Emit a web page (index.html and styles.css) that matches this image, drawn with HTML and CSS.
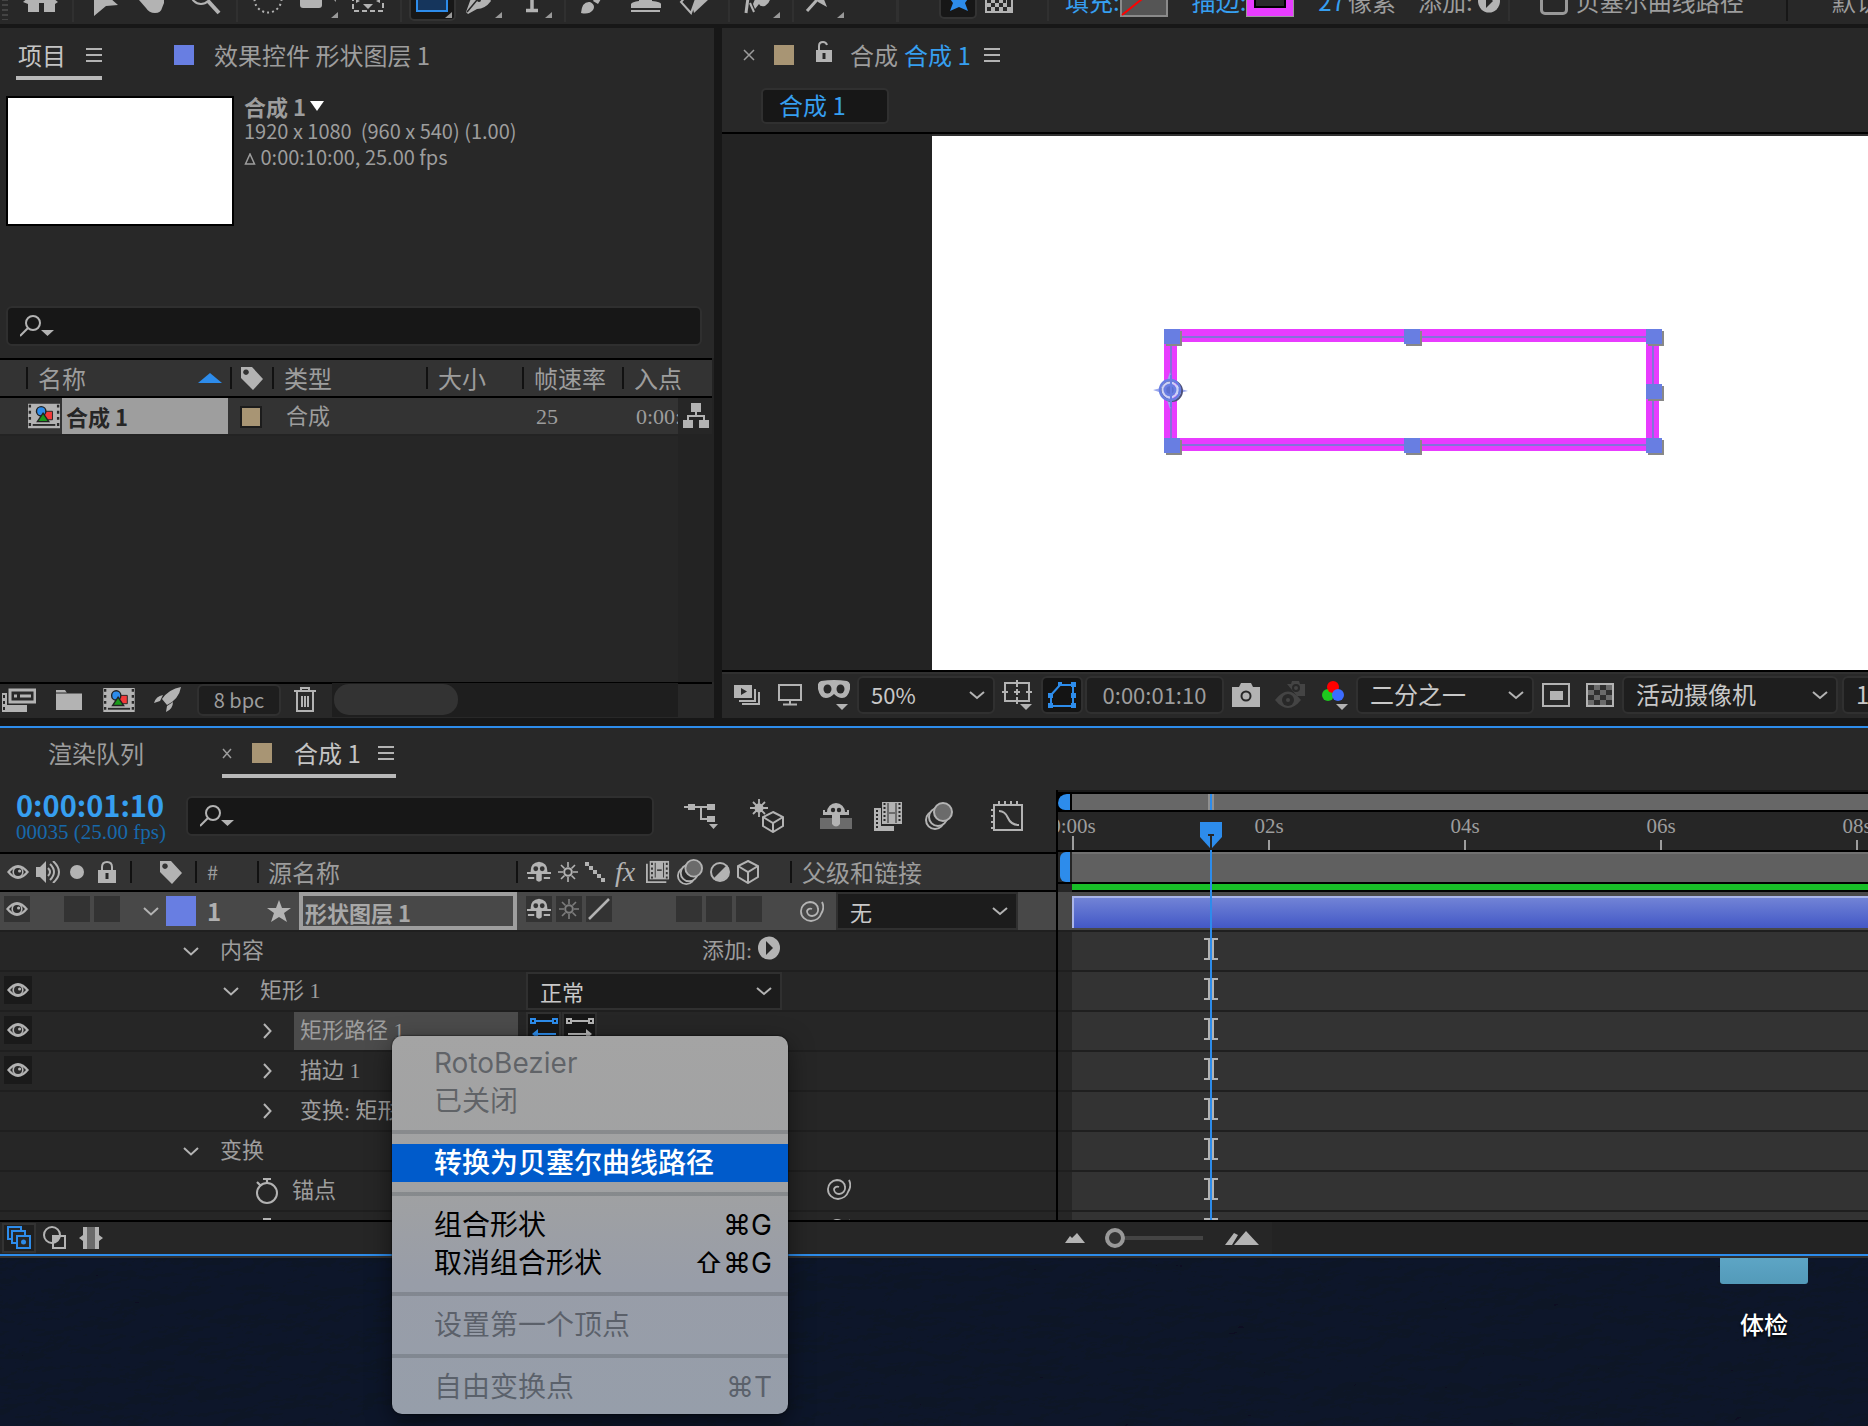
FILE: index.html
```html
<!DOCTYPE html>
<html lang="zh-CN">
<head>
<meta charset="utf-8">
<title>合成 1</title>
<link rel="stylesheet" href="styles.css">
</head>
<body>
<svg class="sprite" aria-hidden="true">
  <symbol id="eye" viewBox="0 0 22 16"><path d="M0 8Q11-6 22 8Q11 22 0 8z" fill="currentColor"/><path d="M3 8Q11-1 19 8Q11 17 3 8z" fill="#2a2a2a"/><circle cx="11" cy="8" r="5.6" fill="currentColor"/><circle cx="11" cy="8" r="4" fill="#2a2a2a"/><circle cx="12.6" cy="7" r="1.6" fill="currentColor"/></symbol>
  <symbol id="tag" viewBox="0 0 24 24"><path fill-rule="evenodd" d="M1 1h11l11 12-10 11L1 12zM6 3.4a2.8 2.8 0 1 0 .01 0z" fill="currentColor"/></symbol>
  <symbol id="menu" viewBox="0 0 16 14"><path d="M0 1h16M0 7h16M0 13h16" stroke="currentColor" stroke-width="2"/></symbol>
  <symbol id="down" viewBox="0 0 16 9"><path d="M1 1l7 6.500 7-6.500" fill="none" stroke="currentColor" stroke-width="2"/></symbol>
  <symbol id="right" viewBox="0 0 9 16"><path d="M1 1l6.500 7-6.500 7" fill="none" stroke="currentColor" stroke-width="2"/></symbol>
  <symbol id="search" viewBox="0 0 34 22"><ellipse cx="13" cy="8" rx="7" ry="7" fill="none" stroke="currentColor" stroke-width="2"/><path d="M8 13L0 21" stroke="currentColor" stroke-width="2"/><path d="M21 15h13l-6.500 6z" fill="currentColor"/></symbol>
  <symbol id="comp" viewBox="0 0 34 26"><path d="M0 0h34v26H0z" fill="currentColor"/><path d="M2 1v24M32 1v24" stroke="#2a2a2a" stroke-width="2.500" stroke-dasharray="3 3.500"/><path d="M5 22.500h24" stroke="#2a2a2a" stroke-width="2"/><path d="M17 8h9v9h-9z" fill="#f33a3a" stroke="#222"/><circle cx="14" cy="8" r="5" fill="#2d8ceb" stroke="#222" stroke-width="1.500"/><path d="M16 10l6 9H10z" fill="#1b9a1b" stroke="#222" stroke-width="1.500"/></symbol>
  <symbol id="shy" viewBox="0 0 26 22"><path d="M4 12q-1-11 9-12 10 1 9 12l-6 1v7q-3 3-6 0v-7z" fill="currentColor"/><circle cx="9.500" cy="7.500" r="2.600" fill="#333"/><circle cx="16.500" cy="7.500" r="2.600" fill="#333"/><path d="M0 12h26M1 17.500h7M18 17.500h7" stroke="currentColor" stroke-width="2.200"/><path d="M9 14v6M17 14v6" stroke="#333" stroke-width="1.500"/></symbol>
  <symbol id="sun" viewBox="0 0 20 20"><circle cx="10" cy="10" r="3.800" fill="none" stroke="currentColor" stroke-width="2"/><path d="M10 0v5M10 15v5M0 10h5M15 10h5M3 3l3.500 3.500M13.500 13.500L17 17M17 3l-3.500 3.500M6.500 13.500L3 17" stroke="currentColor" stroke-width="1.600"/></symbol>
  <symbol id="film" viewBox="0 0 26 24"><path d="M1 3v20h21" fill="none" stroke="currentColor" stroke-width="2"/><path d="M4 0h21v20H4z" fill="currentColor"/><path d="M6.500 2v17M22.500 2v17" stroke="#333" stroke-width="2" stroke-dasharray="2.500 2.500"/><path d="M10 2v16M19 2v16" stroke="#333"/><path d="M12 10h5" stroke="#333" stroke-width="1.600"/></symbol>
  <symbol id="blur" viewBox="0 0 28 28"><g fill="#2a2a2a" stroke="currentColor" stroke-width="2"><circle cx="10" cy="18" r="9"/><circle cx="13" cy="15" r="9"/><circle cx="18" cy="10" r="9" fill="#6b6b6b"/></g></symbol>
  <symbol id="cube" viewBox="0 0 22 24"><path d="M11 1l10 5v11l-10 6-10-6V6zM1 6l10 6 10-6M11 12v11" fill="none" stroke="currentColor" stroke-width="2"/></symbol>
  <symbol id="spiral" viewBox="0 0 24 22"><path d="M22 2c2 4 1 9-1 12a11 9 0 0 1-10 7a10 9.500 0 0 1-10-9.500 10 9 0 0 1 9-9.500 8 7 0 0 1 8 7 6 6 0 0 1-6 7 5 5 0 0 1-5-5 3.500 3.500 0 0 1 5-2" fill="none" stroke="currentColor" stroke-width="1.800"/></symbol>
  <symbol id="watch" viewBox="0 0 24 28"><circle cx="12" cy="16" r="10" fill="none" stroke="currentColor" stroke-width="2"/><path d="M8 2h8M12 2v4M2 5l4 4" stroke="currentColor" stroke-width="2.200"/></symbol>
  <symbol id="beam" viewBox="0 0 14 22"><path d="M0 1h14M0 21h14M5 1v20M9 1v20" stroke="#b3b3b3" stroke-width="2"/></symbol>
  <symbol id="play" viewBox="0 0 22 24"><ellipse cx="11" cy="12" rx="11" ry="11.500" fill="currentColor"/><path d="M8 5v14l7-7z" fill="#262626"/></symbol>
  <symbol id="checker" viewBox="0 0 28 24"><path d="M1 1h26v22H1z" fill="#6b6b6b"/><path d="M2 2h6v5H2zM14 2h6v5h-6zM8 7h6v5H8zM20 7h6v5h-6zM2 12h6v5H2zM14 12h6v5h-6zM8 17h6v5H8zM20 17h6v5h-6z" fill="#303030"/><path d="M1 1h26v22H1z" fill="none" stroke="currentColor" stroke-width="2"/></symbol>
</svg>

<header class="toolbar">
  <div class="tools">
    <svg width="14" height="40" viewBox="0 -18 14 40"><path d="M5 -16v36" stroke="#444" stroke-width="6" stroke-dasharray="2 3"/></svg>
    <button aria-label="主页"><svg width="58" height="40" viewBox="14 -18 58 40"><path d="M23 2L40-12 58 2 55 4V12H44V3h-5v9H28V4z" fill="#b3b3b3"/></svg></button>
    <i class="bar"></i>
    <button aria-label="选取"><svg width="54" height="40" viewBox="74 -18 54 40"><path d="M94-16L118 5l-12 1-12 10z" fill="#b3b3b3"/></svg></button>
    <button aria-label="手形"><svg width="48" height="40" viewBox="128 -18 48 40"><path d="M140-12h24V3l-2 5q-1 5-7 5t-9-5l-7-8z" fill="#b3b3b3"/></svg></button>
    <button aria-label="缩放"><svg width="60" height="40" viewBox="176 -18 60 40"><circle cx="201" cy="-6" r="10" fill="none" stroke="#b3b3b3" stroke-width="2"/><path d="M208 1l11 12" stroke="#b3b3b3" stroke-width="4"/></svg></button>
    <i class="bar"></i>
    <button aria-label="旋转"><svg width="52" height="40" viewBox="238 -18 52 40"><circle cx="268" cy="-1" r="13.500" fill="none" stroke="#b3b3b3" stroke-width="2" stroke-dasharray="2 3"/></svg></button>
    <button aria-label="摄像机"><svg width="52" height="40" viewBox="290 -18 52 40"><rect x="300" y="-12" width="22" height="20" rx="3" fill="#b3b3b3"/><path d="M334 0h2v2z M338 12v6h-7z" fill="#999"/></svg></button>
    <button aria-label="锚点"><svg width="58" height="40" viewBox="342 -18 58 40"><path d="M353-12v23h30v-23" fill="none" stroke="#b3b3b3" stroke-width="2" stroke-dasharray="5 3"/><path d="M363 4h10l-5 5zM356-1l4 2-4 2zM380-1l-4 2 4 2z" fill="#b3b3b3"/></svg></button>
    <i class="bar"></i>
    <button aria-label="矩形"><svg width="58" height="40" viewBox="402 -18 58 40"><rect x="410" y="-20" width="45" height="40" rx="4" fill="#171717" stroke="#333" stroke-width="2"/><rect x="417" y="-14" width="30" height="25" fill="#15355c" stroke="#2d8ceb" stroke-width="2"/><path d="M452 12v6h-7z" fill="#999"/></svg></button>
    <button aria-label="钢笔"><svg width="46" height="40" viewBox="460 -18 46 40"><path d="M474-8h12l5 9q-6 8-14 8l-9 5-2-2 4-11z" fill="#b3b3b3"/><path d="M467 12l10-12" stroke="#282828" stroke-width="1.500"/><circle cx="479" cy="0" r="2" fill="#282828"/><path d="M502 12v6h-7z" fill="#999"/></svg></button>
    <button aria-label="文字"><svg width="58" height="40" viewBox="506 -18 58 40"><path d="M526 10.500h12M532-12v22" stroke="#b3b3b3" stroke-width="3.500"/><path d="M552 12v6h-7z" fill="#999"/></svg></button>
    <i class="bar"></i>
    <button aria-label="画笔"><svg width="50" height="40" viewBox="566 -18 50 40"><path d="M581 13q1-12 9-11 6 3 3 8-4 5-12 3zM593 1l8-12h6l-9 15z" fill="#b3b3b3"/></svg></button>
    <button aria-label="仿制图章"><svg width="54" height="40" viewBox="616 -18 54 40"><path d="M631 8V4q1-2 8-3v-14h13V1q9 1 9 3v4zM631 10h29v2h-29z" fill="#b3b3b3"/></svg></button>
    <button aria-label="橡皮擦"><svg width="58" height="40" viewBox="670 -18 58 40"><path d="M694 13l15-14-4-8h-12l-4 3z" fill="#b3b3b3"/><path d="M681 2l8-9 7 6-5 14z" fill="#282828" stroke="#b3b3b3" stroke-width="2"/></svg></button>
    <i class="bar"></i>
    <button aria-label="Roto 笔刷"><svg width="62" height="40" viewBox="730 -18 62 40"><path d="M749-10l-3 23" stroke="#b3b3b3" stroke-width="3"/><path d="M750 3l4 9" stroke="#b3b3b3" stroke-width="2"/><path d="M753 4l5-12h12q2 10-5 14-5 1-6-2l-4 5z" fill="#b3b3b3"/><path d="M780 12v6h-7z" fill="#999"/></svg></button>
    <i class="bar"></i>
    <button aria-label="人偶位置控点"><svg width="102" height="40" viewBox="794 -18 102 40"><path d="M807 11l18-20" stroke="#b3b3b3" stroke-width="3"/><path d="M814-5l9 2 4 10-9-5z" fill="#b3b3b3"/><path d="M844 12v6h-7z" fill="#999"/></svg></button>
    <i class="bar wide"></i>
  </div>
  <div class="tool-options">
    <svg width="38" height="40" viewBox="939 -18 38 40"><rect x="940" y="-20" width="36" height="39" rx="4" fill="#171717" stroke="#333" stroke-width="2"/><path d="M959-12l4 9h7l-5 7 3 8-9-4-9 4 3-8-5-7h7z" fill="#2d8ceb"/></svg>
    <svg width="28" height="40" viewBox="984 -18 28 40"><path d="M984-10h28v24h-28z" fill="#b3b3b3"/><path d="M986 0h4v4h-4zM994 0h4v4h-4zM1002 0h3v4h-3zM990 4h4v4h-4zM998 4h4v4h-4zM1006 0h4v8h-4zM986 8h4v4h-4zM994 8h4v4h-4zM1002 8h4v4h-4z" fill="#2a2a2a"/></svg>
    <i class="bar opt"></i>
    <a href="#fill" class="fill-link">填充:</a>
    <svg width="48" height="40" viewBox="0 -18 48 40"><path d="M1-14h46v31H1z" fill="#555" stroke="#8a8a8a" stroke-width="2"/><path d="M2 16L27-4" stroke="#f00" stroke-width="2"/></svg>
    <a href="#stroke" class="stroke-link">描边:</a>
    <svg width="48" height="40" viewBox="0 -18 48 40"><path d="M0-14h48v32H0z" fill="#999"/><path d="M1-14h46v31H1z" fill="#e83cff"/><path d="M9-10h30V8H9z" fill="#2a2a2a" stroke="#000" stroke-width="2"/></svg>
    <a href="#width" class="px-link">27</a><span class="px">像素</span>
    <span class="add">添加:</span>
    <svg width="22" height="24"><use href="#play"/></svg>
    <i class="bar add-bar"></i>
    <label class="bezier"><input type="checkbox">贝塞尔曲线路径</label>
    <i class="bar end"></i>
    <span class="preset">默认</span>
  </div>
</header>

<main class="docks">
  <section class="panel project">
    <nav class="tabs">
      <span class="tab active first">项目 <svg width="16" height="14"><use href="#menu"/></svg></span>
      <span class="tab fx-tab"><i class="chip blue"></i>效果控件 形状图层 1</span>
    </nav>
    <div class="summary">
      <div class="thumb"></div>
      <div class="meta">
        <strong>合成 1<svg width="14" height="10" viewBox="0 0 14 10"><path d="M0 0h14L7 10z" fill="#fff"/></svg></strong>
        <span>1920 x 1080&nbsp; (960 x 540) (1.00)</span>
        <span><svg width="12" height="12" viewBox="0 0 12 12"><path d="M6 1l4.500 10h-9z" fill="none" stroke="#9d9d9d" stroke-width="1.500"/></svg> 0:00:10:00, 25.00 fps</span>
      </div>
    </div>
    <label class="search"><svg width="34" height="22"><use href="#search"/></svg><input type="text" aria-label="搜索项目"></label>
    <div class="asset-list">
      <table>
        <colgroup><col class="c0"><col class="c1"><col class="c2"><col class="c3"><col class="c4"><col class="c5"><col class="c6"><col class="c7"></colgroup>
        <thead><tr><th></th><th class="sep"><div class="sortable">名称<svg width="24" height="10" viewBox="0 0 24 10"><path d="M12 0l12 10H0z" fill="#2d8ceb"/></svg></div></th><th class="sep tagcell"><svg width="24" height="24"><use href="#tag"/></svg></th><th class="sep">类型</th><th class="sep">大小</th><th class="sep">帧速率</th><th class="sep" colspan="2">入点</th></tr></thead>
        <tbody><tr><td colspan="2" class="asset"><div><svg width="32" height="26"><use href="#comp"/></svg><b>合成 1</b></div></td><td class="tagcell"><i class="swatch"></i></td><td class="thin">合成</td><td></td><td class="thin">25</td><td class="thin">0:00:00:00</td><td class="tree"><svg width="28" height="26" viewBox="0 0 28 26"><path d="M9 0h10v9H9zM1 17h10v8H1zM17 17h10v8H17z" fill="#b3b3b3"/><path d="M14 8v5M6 18v-5h16v5" fill="none" stroke="#b3b3b3" stroke-width="2"/></svg></td></tr></tbody>
      </table>
    </div>
    <footer class="project-bar">
      <svg width="36" height="26" viewBox="0 0 36 26"><path d="M2 6h5v12h20v7H2z" fill="#b3b3b3"/><path d="M4 8v16" stroke="#282828" stroke-width="2" stroke-dasharray="3 3"/><rect x="10" y="3" width="25" height="12" fill="#282828" stroke="#b3b3b3" stroke-width="3"/><path d="M14 9h3M20 9h11" stroke="#b3b3b3" stroke-width="3"/></svg>
      <svg class="folder" width="26" height="20" viewBox="0 0 26 20"><path d="M0 0h9l2 3h15v17H0z" fill="#b3b3b3"/><path d="M0 3h26" stroke="#282828"/></svg>
      <svg class="compicon" width="34" height="24"><use href="#comp"/></svg>
      <svg class="rocket" width="28" height="26" viewBox="0 0 28 26"><path d="M27 0q-12 2-19 12l5 6Q25 12 27 0zM9 8q-7 1-9 8l6-2zM19 15q0 7-7 10l1-6z" fill="#b3b3b3"/></svg>
      <button class="depth">8 bpc</button>
      <svg width="22" height="26" viewBox="0 0 22 26"><path d="M0 4h22M7 3V1h8v2M3 5v19h16V5M8 9v11M11 9v11M14 9v11" fill="none" stroke="#b3b3b3" stroke-width="2"/></svg>
      <div class="scroll"><i></i></div>
    </footer>
  </section>

  <section class="panel viewer">
    <nav class="tabs">
      <span class="tab comp-tab"><svg width="12" height="12" viewBox="0 0 12 12"><path d="M1 1l10 10M11 1L1 11" stroke="#9d9d9d" stroke-width="1.500"/></svg><i class="chip tan"></i><svg class="lock" width="18" height="22" viewBox="0 0 18 22"><path d="M1 9h16v12H1z" fill="#b3b3b3"/><path d="M4 9V5q0-4 4-4 3 0 4 3" fill="none" stroke="#b3b3b3" stroke-width="2"/><path d="M9 12v6" stroke="#282828" stroke-width="3"/></svg>合成 <a href="#comp1">合成 1</a><svg class="burger" width="16" height="14"><use href="#menu"/></svg></span>
    </nav>
    <button class="crumb">合成 1</button>
    <div class="stage">
      <div class="composition">
        <svg class="shape" width="530" height="140" viewBox="1146 320 530 140">
          <rect x="1170.500" y="335.500" width="482" height="109" fill="none" stroke="#e83cff" stroke-width="13"/>
          <rect x="1171" y="337" width="482" height="108" fill="none" stroke="#8472da" stroke-width="2"/>
          <g fill="#888"><path d="M1166 331h16v15h-16zM1406 331h16v15h-16zM1648 331h16v15h-16zM1648 386h16v15h-16zM1166 440h16v15h-16zM1406 440h16v15h-16zM1648 440h16v15h-16z"/></g>
          <g fill="#687ee2"><path d="M1164 329h16v15h-16zM1404 329h16v15h-16zM1646 329h16v15h-16zM1646 384h16v15h-16zM1164 438h16v15h-16zM1404 438h16v15h-16zM1646 438h16v15h-16z"/></g>
          <path d="M1153 390l12-3 5-15 4 15 14 4-14 3-4 15-5-15z" fill="#9ba8ee"/>
          <g fill="none" stroke="#687ee2"><circle cx="1172" cy="391" r="10" stroke="#4c4f78" stroke-width="2"/><circle cx="1170" cy="390" r="10" stroke-width="2.500"/><circle cx="1170" cy="390" r="7.500" stroke="#ccd2f6" stroke-width="2"/><circle cx="1170" cy="390" r="5" fill="#5d6fd0" stroke-width="2.500"/><path d="M1171 375v32" stroke-width="2"/></g>
        </svg>
      </div>
    </div>
    <footer class="viewer-bar">
      <svg width="26" height="22" viewBox="0 0 26 22"><path d="M0 1h18v13H0z" fill="#b3b3b3"/><path d="M7 4l6 3.500L7 11z" fill="#282828"/><path d="M21 5v12H5M25 8v12H8" fill="none" stroke="#b3b3b3" stroke-width="2"/></svg>
      <svg class="monitor" width="24" height="22" viewBox="0 0 24 22"><path d="M1 1h22v15H1zM12 16v4M5 20.500h14" fill="none" stroke="#b3b3b3" stroke-width="2"/></svg>
      <svg class="mask" width="32" height="30" viewBox="0 0 32 30"><path d="M3 1q13-2 26 0 4 1 3 8-2 9-8 9-4 0-8-4-4 4-8 4-6 0-8-9-1-7 3-8z" fill="#b3b3b3"/><ellipse cx="9.500" cy="9" rx="4" ry="4.500" fill="#282828"/><ellipse cx="22.500" cy="9" rx="4" ry="4.500" fill="#282828"/><path d="M18 24h12l-6 6z" fill="#b3b3b3"/></svg>
      <select class="zoom-level" aria-label="放大率"><option>50%</option></select>
      <svg class="guides" width="30" height="30" viewBox="0 0 30 30"><path d="M3 3h24v18H3zM15 0v7M15 17v7M0 12h6M24 12h6M12 12h6M15 9v6" fill="none" stroke="#b3b3b3" stroke-width="2"/><path d="M18 24h12l-6 6z" fill="#b3b3b3"/></svg>
      <button class="mask-toggle" aria-label="切换蒙版和形状路径可见性"><svg width="28" height="26" viewBox="0 0 28 26"><path d="M3 24V13l9-10h13v21z" fill="none" stroke="#2d8ceb" stroke-width="2"/><path d="M0 11h5v5H0zM10 0h4v4h-4zM23 0h5v5h-5zM23 11h5v5h-5zM23 21h5v5h-5zM0 21h5v5H0z" fill="#2d8ceb"/></svg></button>
      <button class="timecode">0:00:01:10</button>
      <svg class="camera" width="28" height="24" viewBox="0 0 28 24"><path d="M0 4h7l2-4h10l2 4h7v20H0z" fill="#b3b3b3"/><circle cx="14" cy="13" r="5.500" fill="#282828"/><circle cx="14" cy="13" r="3.500" fill="#b3b3b3"/></svg>
      <svg class="ghost" width="30" height="28" viewBox="0 0 30 28"><path d="M12 3h4l1-3h7l1 3h5v12h-8z" fill="#444"/><circle cx="21" cy="7" r="3" fill="none" stroke="#282828" stroke-width="2"/><path d="M0 19q13-17 26 0-13 16-26 0z" fill="#444"/><circle cx="13" cy="19" r="6" fill="#282828"/><circle cx="13" cy="19" r="2" fill="#444"/></svg>
      <svg class="rgb" width="26" height="30" viewBox="0 0 26 30"><circle cx="6" cy="15" r="6" fill="#1ec81e"/><circle cx="11" cy="7" r="6" fill="#f00"/><circle cx="16" cy="15" r="6" fill="#3c6cff"/><path d="M14 24h12l-6 6z" fill="#b3b3b3"/></svg>
      <select class="resolution" aria-label="分辨率"><option>二分之一</option></select>
      <svg class="roi" width="28" height="24" viewBox="0 0 28 24"><path d="M1 1h26v22H1z" fill="none" stroke="#b3b3b3" stroke-width="2"/><path d="M8 8h13v9H8z" fill="#b3b3b3"/></svg>
      <svg class="grid" width="28" height="24"><use href="#checker"/></svg>
      <select class="cam" aria-label="3D 视图"><option>活动摄像机</option></select>
      <select class="views" aria-label="视图布局"><option>1 个视图</option></select>
    </footer>
  </section>
</main>

<section class="timeline">
  <nav class="tabs">
    <span class="tab queue">渲染队列</span>
    <span class="tab active"><svg width="10" height="12" viewBox="0 0 10 12"><path d="M1 2l8 9M9 2L1 11" stroke="#9d9d9d" stroke-width="1.500"/></svg><i class="chip tan"></i>合成 1<svg width="16" height="14"><use href="#menu"/></svg></span>
  </nav>
  <div class="timeline-body">
    <div class="outline">
      <div class="controls">
        <div class="now"><strong>0:00:01:10</strong><span>00035 (25.00 fps)</span></div>
        <label class="search"><svg width="34" height="22"><use href="#search"/></svg><input type="text" aria-label="搜索图层"></label>
        <svg class="flow" width="34" height="26" viewBox="0 0 34 26"><path d="M0 4h24M17 4v12h7" fill="none" stroke="#b3b3b3" stroke-width="2"/><path d="M4 1h7v6H4zM23 1h8v6h-8zM23 13h8v6h-8zM25 21h9l-4.500 5z" fill="#b3b3b3"/></svg>
        <svg class="draft" width="34" height="34" viewBox="0 0 34 34"><circle cx="9" cy="9" r="4.500" fill="#b3b3b3"/><path d="M9 0v18M0 9h18M3 3l12 12M15 3L3 15" stroke="#b3b3b3" stroke-width="1.800"/><path d="M23 13l10 5v9l-10 6-10-6v-9zM13 18l10 6 10-6M23 24v9" fill="#282828" stroke="#b3b3b3" stroke-width="2"/></svg>
        <svg class="hide" width="32" height="26" viewBox="0 0 32 26"><path d="M0 15h32v11H0z" fill="#6b6b6b"/><path d="M7 9a9 9 0 0 1 18 0h2V7h2v5H20v9q-4 5-8 0v-9H3V7h2v2z" fill="#b3b3b3"/><circle cx="13" cy="7" r="2.200" fill="#282828"/><circle cx="19" cy="7" r="2.200" fill="#282828"/></svg>
        <svg class="frames" width="30" height="30" viewBox="0 0 30 30"><path d="M1 7h7v18h13v5H1z" fill="#b3b3b3"/><path d="M4 9v19" stroke="#282828" stroke-width="2" stroke-dasharray="2 2"/><path d="M8 0h22v24H8z" fill="#282828"/><path d="M9 1h20v22H9z" fill="#b3b3b3"/><path d="M11.500 2v20M26.500 2v20" stroke="#282828" stroke-width="2" stroke-dasharray="2 2"/><path d="M15 2v20M23 2v20M16 12h6" stroke="#282828"/></svg>
        <svg class="mblur" width="28" height="30"><use href="#blur"/></svg>
        <svg class="graph" width="32" height="30" viewBox="0 0 32 30"><path d="M3 4h28v25H3zM8 0v5M14 0v5M20 0v5M26 0v5M0 9h4M0 15h4M0 21h4M0 27h4M8 10q6 0 9 7t11 7" fill="none" stroke="#b3b3b3" stroke-width="2"/></svg>
      </div>
      <div class="columns">
        <div class="av"><svg width="22" height="16"><use href="#eye"/></svg><svg width="24" height="22" viewBox="0 0 24 22"><path d="M0 6h4l6-6v22l-6-6H0z" fill="#b3b3b3"/><path d="M12 7q4 4 0 8M14 3q8 8 0 16M17 0q12 11 0 22" fill="none" stroke="#b3b3b3" stroke-width="2"/></svg><svg width="14" height="14" viewBox="0 0 14 14"><circle cx="7" cy="7" r="7" fill="#b3b3b3"/></svg><svg width="18" height="22" viewBox="0 0 18 22"><path d="M0 9h18v13H0z" fill="#b3b3b3"/><path d="M4 9V6q0-5 5-5t5 5v3" fill="none" stroke="#b3b3b3" stroke-width="2"/><path d="M9 12v6" stroke="#282828" stroke-width="3"/></svg></div>
        <div class="sep label"><svg width="24" height="24"><use href="#tag"/></svg></div>
        <div class="sep num">#</div>
        <div class="sep source">源名称</div>
        <div class="sep switches"><svg width="24" height="22"><use href="#shy"/></svg><svg width="20" height="20"><use href="#sun"/></svg><svg width="20" height="20" viewBox="0 0 20 20"><path d="M0 0h4v4H0zM4 4h4v4H4zM8 8h4v4H8zM12 12h4v4h-4zM16 16h4v4h-4z" fill="#b3b3b3"/></svg><em>fx</em><svg width="24" height="24"><use href="#film"/></svg><svg width="26" height="26"><use href="#blur"/></svg><svg width="20" height="20" viewBox="0 0 20 20"><circle cx="10" cy="10" r="9" fill="none" stroke="#b3b3b3" stroke-width="2"/><path d="M3 17A10 10 0 0 0 17 3z" fill="#b3b3b3"/></svg><svg width="22" height="24"><use href="#cube"/></svg></div>
        <div class="sep parent">父级和链接</div>
        <div class="sep rest"></div>
      </div>
      <div class="rows">
        <div class="row layer">
          <div class="av"><i class="box"><svg width="22" height="16"><use href="#eye"/></svg></i><i class="box solo"></i><i class="box"></i></div>
          <div class="name"><svg class="chev" width="16" height="9"><use href="#down"/></svg><i class="label-color"></i><b class="index">1</b><svg class="star" width="24" height="22" viewBox="0 0 24 22"><path d="M12 0l3 8h9l-7 5 3 9-8-5-8 5 3-9-7-5h9z" fill="#b3b3b3"/></svg><input class="rename" type="text" value="形状图层 1" aria-label="图层名称"></div>
          <div class="values"><i class="box"><svg width="24" height="22"><use href="#shy"/></svg></i><i class="box dim"><svg width="20" height="20"><use href="#sun"/></svg></i><i class="box"><svg width="22" height="22" viewBox="0 0 22 22"><path d="M1 21L21 1" stroke="#b3b3b3" stroke-width="2.500"/></svg></i><i class="box late"></i><i class="box"></i><i class="box"></i></div>
          <div class="link"><svg width="24" height="22"><use href="#spiral"/></svg><select class="parent-select" aria-label="父级"><option>无</option></select></div>
        </div>
        <div class="row"><div class="av"></div><div class="name d1"><svg class="chev" width="16" height="9"><use href="#down"/></svg>内容</div><div class="values end">添加:<svg width="22" height="24"><use href="#play"/></svg></div></div>
        <div class="row"><div class="av"><i class="box dark"><svg width="22" height="16"><use href="#eye"/></svg></i></div><div class="name d2"><svg class="chev" width="16" height="9"><use href="#down"/></svg>矩形 1</div><div class="values"><select class="mode" aria-label="混合模式"><option>正常</option></select></div></div>
        <div class="row"><div class="av"><i class="box dark"><svg width="22" height="16"><use href="#eye"/></svg></i></div><div class="name d3"><svg class="chev" width="9" height="16"><use href="#right"/></svg><span class="picked">矩形路径 1</span></div><div class="values paths"><button class="dir on" aria-label="正向路径"><svg width="28" height="22" viewBox="0 0 28 22"><path d="M1 1h4v4H1zM23 1h4v4h-4zM5 3h18M6 16h20" fill="none" stroke="currentColor" stroke-width="2"/><path d="M2 16l6-5v10z" fill="currentColor"/></svg></button><button class="dir" aria-label="反向路径"><svg width="28" height="22" viewBox="0 0 28 22"><path d="M1 1h4v4H1zM23 1h4v4h-4zM5 3h18M2 16h20" fill="none" stroke="currentColor" stroke-width="2"/><path d="M26 16l-6-5v10z" fill="currentColor"/></svg></button></div></div>
        <div class="row"><div class="av"><i class="box dark"><svg width="22" height="16"><use href="#eye"/></svg></i></div><div class="name d3"><svg class="chev" width="9" height="16"><use href="#right"/></svg>描边 1</div></div>
        <div class="row"><div class="av"></div><div class="name d3"><svg class="chev" width="9" height="16"><use href="#right"/></svg>变换: 矩形 1</div></div>
        <div class="row"><div class="av"></div><div class="name d1"><svg class="chev" width="16" height="9"><use href="#down"/></svg>变换</div></div>
        <div class="row"><div class="av"></div><div class="name prop"><svg width="24" height="28"><use href="#watch"/></svg>锚点</div><div class="values"></div><div class="link deep"><svg width="24" height="22"><use href="#spiral"/></svg></div></div>
        <div class="row"><div class="av"></div><div class="name prop"><svg width="24" height="28"><use href="#watch"/></svg></div><div class="values"></div><div class="link deep"><svg width="24" height="22"><use href="#spiral"/></svg></div></div>
      </div>
    </div>
    <div class="tracks">
      <div class="navigator"><i class="grip"></i><i class="range"></i></div>
      <div class="ruler"><span>0:00s</span><span>02s</span><span>04s</span><span>06s</span><span>08s</span></div>
      <div class="work"><i class="grip"></i><i class="range"></i></div>
      <div class="cache"></div>
      <div class="lanes">
        <div class="lane top"><i class="clip"></i></div>
        <div class="lane"><svg width="14" height="22"><use href="#beam"/></svg></div>
        <div class="lane"><svg width="14" height="22"><use href="#beam"/></svg></div>
        <div class="lane"><svg width="14" height="22"><use href="#beam"/></svg></div>
        <div class="lane"><svg width="14" height="22"><use href="#beam"/></svg></div>
        <div class="lane"><svg width="14" height="22"><use href="#beam"/></svg></div>
        <div class="lane"><svg width="14" height="22"><use href="#beam"/></svg></div>
        <div class="lane"><svg width="14" height="22"><use href="#beam"/></svg></div>
        <div class="lane"><svg width="14" height="22"><use href="#beam"/></svg></div>
      </div>
      <i class="nav-mark"></i>
      <i class="playline"></i>
      <svg class="playhead" width="22" height="26" viewBox="0 0 22 26"><path d="M0 0h22v15L12 26h-2L0 15z" fill="#2d8ceb"/><path d="M8 13h6M11 13v13" stroke="#262626" stroke-width="2"/></svg>
    </div>
  </div>
  <footer class="timeline-bar">
    <button class="pane on" aria-label="图层开关"><svg width="24" height="24" viewBox="0 0 24 24"><g fill="#262626" stroke="currentColor" stroke-width="2"><path d="M1 1h13v12H1z"/><path d="M5 5h13v12H5z"/><path d="M10 10h13v12H10z"/></g><circle cx="16.500" cy="16" r="2.500" fill="currentColor"/></svg></button>
    <button class="pane" aria-label="转换控制"><svg width="24" height="24" viewBox="0 0 24 24"><path d="M10 10h12v12H10z" fill="none" stroke="#b3b3b3" stroke-width="2"/><circle cx="9" cy="9" r="8" fill="none" stroke="#b3b3b3" stroke-width="2"/><path d="M10 10h7q-1 6-7 7z" fill="#b3b3b3"/></svg></button>
    <button class="pane" aria-label="入点出点"><svg width="24" height="24" viewBox="0 0 24 24"><path d="M6 1h12v22H6z" fill="#6b6b6b"/><path d="M4 1h4v22H4v-8l-4-3 4-3zM20 1h-4v22h4v-8l4-3-4-3z" fill="#b3b3b3"/></svg></button>
    <div class="zoomer"><svg width="20" height="10" viewBox="0 0 20 10"><path d="M0 10l5-7 2 2 5-5 8 10z" fill="#b3b3b3"/></svg><input type="range" min="0" max="100" value="0" aria-label="时间轴缩放"><svg width="34" height="14" viewBox="0 0 34 14"><path d="M0 14L9 2l4 2-6 10zM9 14L21 0l13 14z" fill="#b3b3b3"/></svg></div>
  </footer>
</section>

<section class="desktop">
  <svg class="rock" aria-hidden="true"><filter id="stone"><feTurbulence type="fractalNoise" baseFrequency="0.02 0.045" numOctaves="5" seed="4"/><feDiffuseLighting lighting-color="#07182b" surfaceScale="2" diffuseConstant="1.150"><feDistantLight azimuth="235" elevation="55"/></feDiffuseLighting></filter><rect width="100%" height="100%" filter="url(#stone)"/></svg>
  <figure class="folder-item"><i></i><figcaption>体检</figcaption></figure>
</section>

<menu class="context">
  <li><button disabled>RotoBezier</button></li>
  <li><button disabled>已关闭</button></li>
  <li class="rule"></li>
  <li><button class="hot">转换为贝塞尔曲线路径</button></li>
  <li class="rule"></li>
  <li><button>组合形状<kbd>⌘G</kbd></button></li>
  <li><button>取消组合形状<kbd>⇧⌘G</kbd></button></li>
  <li class="rule"></li>
  <li><button disabled>设置第一个顶点</button></li>
  <li class="rule"></li>
  <li><button disabled>自由变换点<kbd>⌘T</kbd></button></li>
</menu>
</body>
</html>
```
FILE: styles.css
```css
* { box-sizing: border-box; }
:root {
  --ui: "Noto Sans CJK SC", "Noto Sans", sans-serif;
  --thin: "Liberation Serif", "Noto Sans CJK SC", serif;
  --panel: #282828;
  --edge: #171717;
  --text: #9d9d9d;
  --icon: #b3b3b3;
  --blue: #2d8ceb;
  --link: #369ff0;
}
html, body { height: 100%; }
body {
  margin: 0;
  position: relative;
  display: flex;
  flex-direction: column;
  min-height: 100vh;
  overflow: hidden;
  background: var(--edge);
  color: var(--text);
  font: 24px/28px var(--ui);
}
svg { display: block; flex: none; color: var(--icon); }
i { display: block; flex: none; }
button, input, select { font: inherit; color: inherit; margin: 0; }
button { padding: 0; border: 0; background: none; flex: none; }
a { color: var(--link); text-decoration: none; }
.sprite { position: absolute; width: 0; height: 0; }

/* toolbar */
.toolbar { display: flex; height: 24px; flex: none; overflow: hidden; background: var(--panel); white-space: nowrap; }
.tools, .tool-options { display: flex; align-items: center; height: 40px; margin-top: -18px; flex: none; }
.tools button { color: var(--icon); }
.bar { width: 2px; height: 40px; background: #303030; }
.bar.wide { width: 3px; }
.tool-options { padding-left: 40px; gap: 8px; line-height: 24px; padding-bottom: 2px; }
.bar.opt { margin: 0 8px 0 26px; }
.fill-link, .stroke-link { margin-right: -8px; }
.stroke-link { margin-left: 16px; }
.px-link { margin-left: 16px; margin-right: -5px; }
.add { margin: 0 -3px 0 14px; }
.add-bar { margin-right: 22px; }
.bezier { display: flex; align-items: center; gap: 8px; }
.bezier input { appearance: none; width: 28px; height: 28px; border: 3px solid #999; border-radius: 5px; }
.bar.end { margin: 0 36px 0 34px; background: var(--edge); }

/* docks */
.docks { flex: 1; min-height: 0; display: grid; grid-template-columns: 714px minmax(0, 1fr); gap: 8px; padding: 4px 0 8px; }
.panel { background: var(--panel); display: flex; flex-direction: column; min-width: 0; min-height: 0; overflow: hidden; }
.tabs { display: flex; height: 52px; flex: none; }
.tab { display: flex; align-items: center; height: 52px; padding: 6px 0 0; border-bottom: 4px solid transparent; white-space: nowrap; }
.tab.active { color: #c4c4c4; border-color: #b9b9b9; }
.chip { width: 20px; height: 20px; }
.chip.blue { background: #687ee2; }
.chip.tan { background: #a89574; }
.first { margin-left: 16px; padding-left: 2px; gap: 20px; }
.fx-tab { margin-left: 72px; gap: 20px; }
.summary { display: flex; gap: 10px; padding: 16px 6px 0; height: 226px; }
.thumb { width: 228px; height: 130px; background: #fff; border: 2px solid #000; }
.meta { display: flex; flex-direction: column; font-size: 20px; line-height: 26px; margin-top: -2px; }
.meta strong { font-size: 22px; display: flex; align-items: center; line-height: 24px; }
.meta strong svg { margin-left: 4px; }
.meta span svg { display: inline-block; }
.search { display: flex; align-items: center; height: 40px; background: var(--edge); border: 2px solid #2f2f2f; border-radius: 6px; padding-left: 12px; }
.search input { flex: 1; min-width: 0; border: 0; background: none; outline: 0; }
.project .search { margin: 0 12px 12px 6px; flex: none; }
.asset-list { flex: 1; min-height: 0; background: linear-gradient(90deg, #262626 678px, #232323 678px); }
table { width: 712px; table-layout: fixed; border-collapse: separate; border-spacing: 0; border-top: 2px solid #000; }
.c0 { width: 26px; } .c1 { width: 204px; } .c2 { width: 42px; } .c3 { width: 154px; }
.c4 { width: 96px; } .c5 { width: 100px; } .c6 { width: 56px; } .c7 { width: 34px; }
th { height: 38px; padding: 0 0 0 12px; background: #333; border-bottom: 2px solid #000; font-weight: 400; text-align: left; }
.sep { background-image: linear-gradient(#111, #111); background-size: 2px 22px; background-position: 0 center; background-repeat: no-repeat; }
.sortable { display: flex; align-items: center; justify-content: space-between; padding-right: 8px; }
td { height: 38px; padding: 2px 0 0 14px; background: #333; border-bottom: 2px solid #232323; font-size: 22px; overflow: hidden; white-space: nowrap; }
.thin { font-family: var(--thin); }
.tagcell, td.tagcell { padding-left: 10px; }
td.asset { padding: 0 2px 0 28px; }
.asset div { display: flex; align-items: center; gap: 2px; height: 36px; }
.asset b { flex: 1; height: 36px; line-height: 36px; padding-left: 4px; background: #9e9e9e; color: #262626; }
.swatch { width: 22px; height: 22px; border: 2px solid #1c1c1c; background: #a89574; }
td.tree { padding: 0 0 0 4px; background: #262626; }
.project-bar { display: flex; align-items: center; height: 36px; flex: none; border-top: 2px solid #000; width: 712px; padding-bottom: 2px; }
.project-bar .folder { margin-left: 20px; }
.project-bar .compicon { margin-left: 20px; }
.project-bar .rocket { margin-left: 18px; }
.depth { width: 84px; height: 32px; margin: 0 13px 0 15px; background: #1e1e1e; border: 2px solid #303030; border-radius: 6px; font-size: 20px; line-height: 26px; }
.scroll { width: 346px; height: 34px; margin-left: 16px; background: #1e1e1e; padding: 1px 2px; }
.scroll i { width: 124px; height: 31px; border-radius: 15px; background: #333; }

/* viewer */
.comp-tab { margin-left: 21px; }
.comp-tab .chip { margin: 0 21px 0 19px; }
.comp-tab .lock { margin-right: 17px; margin-top: -6px; }
.comp-tab a { margin-left: 6px; }
.burger { margin-left: 13px; }
.crumb { width: 128px; height: 36px; margin: 8px 0 8px 39px; background: var(--edge); border: 2px solid #303030; border-radius: 5px; color: var(--link); text-align: left; padding: 0 0 2px 16px; line-height: 28px; }
.stage { flex: 1; min-height: 0; display: flex; background: #232323; border-top: 2px solid #000; border-bottom: 2px solid #000; }
.composition { flex: 1; margin-left: 210px; background: #fff; position: relative; overflow: hidden; border-top: 2px solid #303030; }
.shape { position: absolute; left: 214px; top: 184px; }
.viewer-bar { display: flex; align-items: center; height: 46px; flex: none; border-top: 2px solid #303030; padding: 0 0 2px 12px; white-space: nowrap; }
.monitor { margin-left: 18px; }
.mask { margin: 0 7px 0 16px; }
select { appearance: none; border: 2px solid #303030; border-radius: 6px; padding: 0 0 2px 12px; color: #c8c8c8; background: #1e1e1e url("data:image/svg+xml,%3Csvg xmlns='http://www.w3.org/2000/svg' width='16' height='9'%3E%3Cpath d='M1 1l7 6 7-6' fill='none' stroke='%23b3b3b3' stroke-width='2'/%3E%3C/svg%3E") no-repeat right 8px center; flex: none; }
.viewer-bar select, .timecode, .mask-toggle { height: 38px; }
.zoom-level { width: 138px; font-size: 22px; }
.guides { margin: 0 9px 0 7px; }
.mask-toggle { width: 42px; display: grid; place-items: center; background: #141414; border: 2px solid #303030; border-radius: 6px; }
.timecode { width: 139px; margin-left: 2px; background: #1e1e1e; border: 2px solid #303030; border-radius: 6px; font-size: 22px; line-height: 32px; padding-bottom: 2px; }
.camera { margin: 0 15px 0 8px; }
.rgb { margin: 0 8px 0 17px; }
.resolution { width: 178px; }
.roi { margin: 0 16px 0 8px; }
.grid { margin-right: 8px; }
.cam { width: 216px; }
.views { width: 150px; margin-left: 4px; }

/* timeline */
.timeline { flex: none; background: var(--panel); border-top: 2px solid var(--blue); border-bottom: 2px solid var(--blue); }
.timeline .tabs { height: 62px; }
.timeline .tab { height: 50px; padding-top: 4px; }
.queue { margin: 0 78px 0 48px; }
.timeline .active .chip { margin: 0 22px 0 20px; }
.timeline .active svg:last-child { margin: 0 2px 0 17px; }
.timeline-body { display: grid; grid-template-columns: 1056px minmax(0, 1fr); height: 430px; overflow: hidden; }
.outline { min-width: 0; background: #262626; height: 430px; overflow: hidden; }
.controls { display: flex; align-items: center; height: 62px; padding: 0 0 10px 16px; background: var(--panel); white-space: nowrap; }
.now { width: 170px; display: flex; flex-direction: column; padding-top: 4px; }
.now strong { color: var(--link); font-size: 29px; line-height: 28px; }
.now span { color: #1769ab; font: 21px/28px var(--thin); }
.controls .search { width: 468px; }
.flow { margin-left: 30px; } .draft { margin-left: 32px; } .hide { margin-left: 36px; }
.frames { margin-left: 21px; } .mblur { margin-left: 22px; } .graph { margin-left: 38px; }
.columns { display: flex; align-items: center; height: 40px; border-top: 2px solid #000; border-bottom: 2px solid #000; background: #333; white-space: nowrap; }
.columns > div { height: 36px; display: flex; align-items: center; flex: none; }
.columns .av { width: 130px; padding: 0 0 0 7px; }
.columns .av svg { margin-right: 10px; }
.columns .av svg:nth-child(1) { margin-right: 7px; }
.columns .av svg:nth-child(3) { margin-right: 14px; }
.columns .label { width: 65px; padding-left: 29px; }
.columns .num { width: 62px; padding-left: 12px; font-size: 20px; }
.columns .source { width: 259px; padding-left: 11px; }
.columns .switches { width: 274px; padding-left: 11px; gap: 7px; }
.switches em { font: italic 28px/28px "Liberation Serif", serif; color: var(--icon); width: 24px; margin-left: 3px; }
.columns .parent { width: 234px; padding-left: 12px; }
.row { display: flex; height: 40px; border-bottom: 2px solid #1f1f1f; font: 22px/38px var(--thin); white-space: nowrap; }
.row > div { display: flex; height: 38px; align-items: center; flex: none; }
.row .av { width: 130px; padding: 4px 0 0 4px; gap: 4px; align-items: flex-start; }
.row .name { width: 390px; }
.box { width: 26px; height: 26px; background: #333; display: grid; place-items: center; }
.box.dark { width: 28px; height: 28px; background: #1a1a1a; }
.box.solo { margin-left: 30px; }
.dim svg { color: #7d7d7d; }
.layer { background: #484848; font: 22px/36px var(--ui); }
.layer .name { padding-left: 13px; }
.label-color { width: 30px; height: 30px; margin: 0 11px 0 7px; background: #687ee2; }
.index { width: 60px; font-size: 24px; color: #b0b0b0; }
.rename { width: 218px; height: 38px; margin-left: 8px; background: #484848; border: 4px solid #9e9e9e; padding: 2px 0 0 2px; outline: 0; font-weight: 700; color: #a8a8a8; }
.d1 { padding-left: 53px; } .d2 { padding-left: 93px; } .d3 { padding-left: 133px; }
.d1 .chev { margin-right: 21px; } .d2 .chev { margin-right: 21px; } .d3 .chev { margin-right: 28px; }
.picked { flex: 1; height: 38px; margin: 0 2px 0 -6px; padding-left: 6px; background: #4b4b4b; }
.prop { padding-left: 125px; gap: 13px; }
.values { width: 280px; padding-left: 6px; gap: 4px; }
.layer .values { align-items: flex-start; padding-top: 4px; }
.box.late { margin-left: 60px; }
.values.end { justify-content: flex-end; gap: 6px; padding-right: 20px; }
.values.end svg { margin-bottom: 6px; }
.row select { height: 38px; border-radius: 0; font: 22px/34px var(--ui); background-color: #1c1c1c; }
.mode { width: 256px; }
.parent-select { width: 182px; margin-left: 12px; }
.row .values.paths { gap: 1px; align-items: stretch; }
.dir { width: 35px; padding: 4px 0; display: grid; justify-items: center; background: #171717; border: 2px solid #303030; border-bottom: 0; }
.dir.on svg { color: var(--blue); }
.deep { padding: 0 0 4px 27px; }

.tracks { position: relative; overflow: hidden; min-width: 0; background: #262626; border-left: 2px solid #000; height: 430px; }
.navigator { display: flex; height: 22px; padding-top: 2px; border-top: 2px solid #1a1a1a; border-bottom: 2px solid #000; background: #000; }
.grip { width: 12px; background: var(--blue); border-radius: 10px 0 0 8px; margin-right: 2px; }
.range { flex: 1; background: #676767; }
.ruler { display: flex; height: 38px; margin-left: -83px; font: 21px/28px var(--thin); overflow: hidden; }
.ruler span { width: 196px; flex: none; text-align: center; background: linear-gradient(var(--text), var(--text)) center bottom / 2px 10px no-repeat; }
.ruler span:first-child { background-size: 2px 14px; }
.work { display: flex; height: 34px; border-top: 2px solid #000; border-bottom: 2px solid #000; }
.work .grip { width: 10px; margin-left: 2px; border-radius: 6px 0 0 6px; }
.work .range { background: #606060; border-top: 2px solid #717171; }
.cache { height: 8px; margin-left: 14px; background: #18bf27; border-bottom: 2px solid #000; }
.lane { height: 40px; padding: 6px 0 0 146px; border-bottom: 2px solid #1f1f1f; background: linear-gradient(90deg, #262626 14px, #333 14px); }
.lane.top { background: #484848; padding: 4px 0 2px 14px; }
.clip { height: 32px; border-top: 2px solid #aab5e8; border-left: 2px solid #aab5e8; background: linear-gradient(#7183d6, #4358c6); }
.playline { position: absolute; left: 152px; top: 60px; bottom: 0; width: 2px; background: var(--blue); }
.playhead { position: absolute; left: 142px; top: 32px; }
.nav-mark { position: absolute; left: 150px; top: 4px; width: 6px; height: 16px; background: var(--blue); border: solid #8f8f8f; border-width: 0 2px; }
.timeline-bar { display: flex; align-items: center; height: 34px; background: linear-gradient(90deg, #262626 1272px, #232323 1272px); border-top: 2px solid #000; padding-left: 2px; gap: 2px; }
.pane { width: 34px; height: 30px; display: grid; place-items: center; }
.pane.on { border: 2px solid #333; background: #1f1f1f; }
.pane.on svg { color: var(--blue); }
.zoomer { display: flex; align-items: center; margin-left: 955px; }
.zoomer input { appearance: none; width: 98px; height: 20px; margin: 0 22px 0 20px; background: linear-gradient(#444, #444) center / 100% 4px no-repeat; }
.zoomer input::-webkit-slider-thumb { appearance: none; width: 20px; height: 20px; border: 4px solid #999; border-radius: 50%; background: #333; }

/* desktop */
.desktop { position: relative; height: 170px; flex: none; background: #08172b; overflow: hidden; border-top: 2px solid #303030; display: flex; justify-content: flex-end; }
.rock { position: absolute; inset: 0; width: 100%; height: 100%; }
.folder-item { position: relative; width: 88px; margin: 0 60px 0 0; text-align: center; color: #fff; font-weight: 500; }
.folder-item i { height: 26px; margin-bottom: 26px; background: linear-gradient(#5da5c5, #539ab9); border-radius: 0 0 3px 3px; }
.folder-item figcaption { text-shadow: 0 2px 3px #000; }

/* context menu */
.context { position: absolute; left: 392px; top: 1036px; width: 396px; margin: 0; padding: 8px 0; list-style: none; border-radius: 10px; background: linear-gradient(#a4a4a4, #a0a1a2 40%, #989da8 65%, #969eaa); box-shadow: 0 0 2px #000, 0 8px 24px rgba(0, 0, 0, .5); font: 28px/38px Inter, "Noto Sans CJK SC", sans-serif; color: #000; }
.context button { display: flex; justify-content: space-between; width: 100%; height: 38px; padding: 0 16px 0 42px; line-height: 38px; }
.context button:disabled { color: rgba(45, 50, 58, .56); }
.context .hot { background: #005bcb; color: #fff; font-weight: 500; }
.context .rule { height: 4px; margin: 10px 0; background: rgba(90, 95, 100, .35); }
kbd { font: inherit; }
```
